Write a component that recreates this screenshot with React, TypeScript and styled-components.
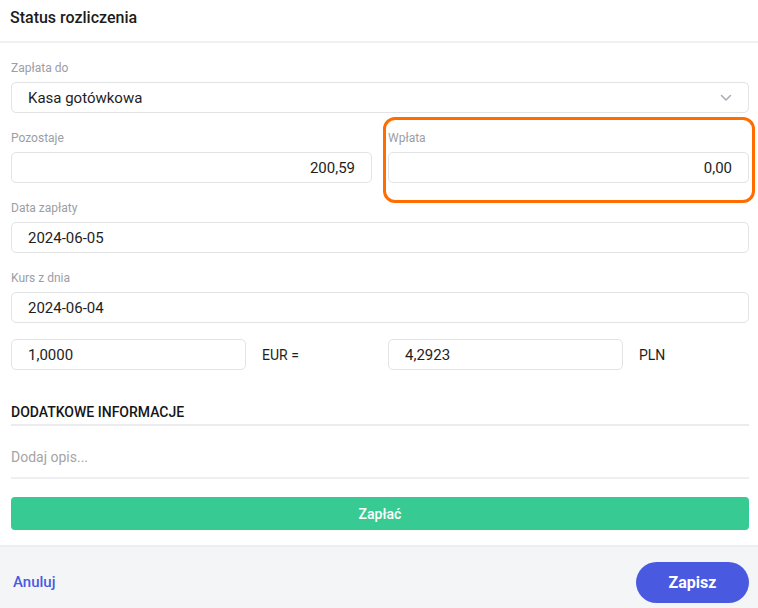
import React from 'react';
import styled, { createGlobalStyle } from 'styled-components';

const GlobalStyle = createGlobalStyle`
	html, body {
		margin: 0;
		padding: 0;
		background: #ffffff;
		font-family: Roboto, "Liberation Sans", Arial, sans-serif;
	}
	* {
		box-sizing: border-box;
	}
`;

const Modal = styled.div`
	width: 758px;
	height: 608px;
	overflow: hidden;
	display: flex;
	flex-direction: column;
	background: #ffffff;
`;

const Header = styled.div`
	height: 43px;
	padding: 8px 10px 0;
	border-bottom: 2px solid #eff0f2;
`;

const Title = styled.h1`
	margin: 0;
	font-size: 16px;
	line-height: 20px;
	font-weight: 500;
	color: #1c1c1c;
`;

const Body = styled.div`
	padding: 18px 9px 15px 11px;
`;

const Field = styled.div`
	position: relative;
	margin-bottom: 18px;
`;

const Highlight = styled.div`
	position: absolute;
	left: -5px;
	right: -6px;
	top: -14px;
	bottom: -20px;
	border: 3px solid #ff6c00;
	border-radius: 12px;
	pointer-events: none;
`;

const Label = styled.div`
	font-size: 12px;
	line-height: 14px;
	color: #9b9ea6;
	margin-bottom: 7px;
`;

const Box = styled.div<{ $align?: 'left' | 'right'; $width?: number }>`
	height: 31px;
	width: ${(p) => (p.$width ? `${p.$width}px` : '100%')};
	border: 1px solid #e2e3e5;
	border-radius: 5px;
	padding: 0 16px;
	display: flex;
	align-items: center;
	justify-content: ${(p) => (p.$align === 'right' ? 'flex-end' : 'space-between')};
	font-size: 15px;
	color: #1e1e1e;
	background: #ffffff;
`;

const TwoCols = styled.div`
	display: grid;
	grid-template-columns: 1fr 1fr;
	column-gap: 16px;
`;

const RateRow = styled.div`
	display: grid;
	grid-template-columns: 1fr 1fr;
	column-gap: 16px;
	margin-top: -2px;
`;

const RateCell = styled.div`
	display: flex;
	align-items: center;
`;

const Unit = styled.span`
	margin-left: 16px;
	font-size: 14px;
	color: #1e1e1e;
`;

const SectionTitle = styled.div`
	margin-top: 34px;
	padding-bottom: 4px;
	font-size: 14px;
	line-height: 16px;
	font-weight: 500;
	color: #161616;
	text-transform: uppercase;
	border-bottom: 2px solid #ececee;
`;

const Description = styled.div`
	padding: 23px 0 11px;
	font-size: 14px;
	line-height: 17px;
	color: #a4a4a4;
	border-bottom: 2px solid #eeeff1;
`;

const PayButton = styled.button`
	margin-top: 18px;
	width: 100%;
	height: 33px;
	border: none;
	border-radius: 4px;
	background: #38ca93;
	color: #ffffff;
	font-family: inherit;
	font-size: 14px;
	font-weight: 500;
`;

const Footer = styled.div`
	flex: 1;
	background: #f4f5f7;
	border-top: 2px solid #eceef1;
	display: flex;
	align-items: flex-start;
	justify-content: space-between;
	padding: 15px 9px 0 13px;
`;

const CancelLink = styled.span`
	margin-top: 11px;
	font-size: 15px;
	font-weight: 500;
	color: #4b5ae0;
`;

const SaveButton = styled.button`
	width: 113px;
	height: 41px;
	border: none;
	border-radius: 21px;
	background: #4a5ae0;
	color: #ffffff;
	font-family: inherit;
	font-size: 16px;
	font-weight: 700;
`;

const Chevron = () => (
	<svg width="12" height="8" viewBox="0 0 12 8" fill="none">
		<polyline points="1.5,1.5 6,6 10.5,1.5" stroke="#a9abb0" strokeWidth="1.5" strokeLinecap="round" strokeLinejoin="round" />
	</svg>
);

function App() {
	return (
		<>
			<GlobalStyle />
			<Modal>
				<Header>
					<Title>Status rozliczenia</Title>
				</Header>
				<Body>
					<Field>
						<Label>Zapłata do</Label>
						<Box>
							<span>Kasa gotówkowa</span>
							<Chevron />
						</Box>
					</Field>
					<TwoCols>
						<Field>
							<Label>Pozostaje</Label>
							<Box $align="right">200,59</Box>
						</Field>
						<Field>
							<Highlight />
							<Label>Wpłata</Label>
							<Box $align="right">0,00</Box>
						</Field>
					</TwoCols>
					<Field>
						<Label>Data zapłaty</Label>
						<Box>2024-06-05</Box>
					</Field>
					<Field>
						<Label>Kurs z dnia</Label>
						<Box>2024-06-04</Box>
					</Field>
					<RateRow>
						<RateCell>
							<Box $width={235}>1,0000</Box>
							<Unit>EUR =</Unit>
						</RateCell>
						<RateCell>
							<Box $width={235}>4,2923</Box>
							<Unit>PLN</Unit>
						</RateCell>
					</RateRow>
					<SectionTitle>Dodatkowe informacje</SectionTitle>
					<Description>Dodaj opis...</Description>
					<PayButton>Zapłać</PayButton>
				</Body>
				<Footer>
					<CancelLink>Anuluj</CancelLink>
					<SaveButton>Zapisz</SaveButton>
				</Footer>
			</Modal>
		</>
	);
}

export default App;
